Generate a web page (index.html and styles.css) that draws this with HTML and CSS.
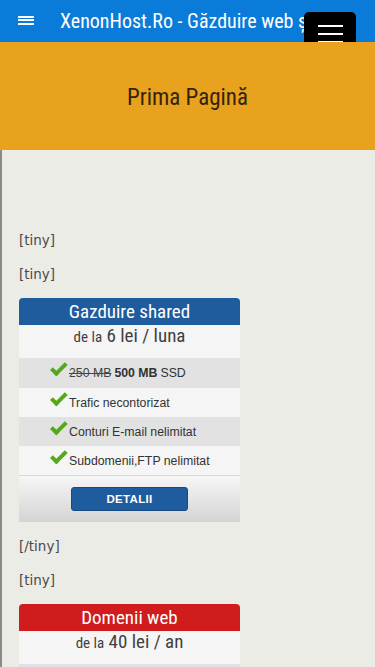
FILE: index.html
```html
<!DOCTYPE html>
<html lang="ro">
<head>
<meta charset="utf-8">
<title>XenonHost.Ro</title>
<link rel="stylesheet" href="styles.css">
</head>
<body>
<header class="topbar">
  <span class="side-toggle" aria-hidden="true"><i></i><i></i><i></i></span>
  <span class="site-title">XenonHost.Ro - Găzduire web şi domenii</span>
  <button class="menu-btn" aria-label="Meniu"><i></i><i></i><i></i></button>
</header>
<section class="hero">
  <h1>Prima Pagină</h1>
</section>
<main class="content">
  <p class="tag">[tiny]</p>
  <p class="tag">[tiny]</p>
  <div class="plan">
    <div class="plan-head blue">Gazduire shared</div>
    <div class="plan-price"><span class="small">de la</span> 6 lei / luna</div>
    <ul class="plan-list">
      <li><span class="check"></span><s>250 MB</s> <b>500 MB</b> SSD</li>
      <li><span class="check"></span>Trafic necontorizat</li>
      <li><span class="check"></span>Conturi E-mail nelimitat</li>
      <li><span class="check"></span>Subdomenii,FTP nelimitat</li>
    </ul>
    <div class="plan-foot"><a class="btn" href="#">DETALII</a></div>
  </div>
  <p class="tag">[/tiny]</p>
  <p class="tag">[tiny]</p>
  <div class="plan">
    <div class="plan-head red">Domenii web</div>
    <div class="plan-price"><span class="small">de la</span> 40 lei / an</div>
    <ul class="plan-list">
      <li></li>
    </ul>
  </div>
</main>
</body>
</html>
```
FILE: styles.css
```css
* { box-sizing: border-box; }
html, body { margin: 0; padding: 0; }
body {
  background: #ecece7;
  font-family: "DejaVu Sans", sans-serif;
  overflow: hidden;
  height: 667px;
}
.topbar {
  height: 42px;
  background: #0a7bd9;
  display: flex;
  align-items: center;
  position: relative;
  overflow: hidden;
}
.side-toggle {
  flex: 0 0 16px;
  display: flex;
  flex-direction: column;
  gap: 1.5px;
  margin: -2px 26px 0 18px;
}
.side-toggle i {
  display: block;
  height: 2px;
  background: #fff;
}
.site-title {
  flex: 0 0 250px;
  overflow: hidden;
  color: #fff;
  font-family: "Roboto Condensed", Roboto, sans-serif;
  font-size: 20px;
  white-space: nowrap;
}
.menu-btn {
  position: absolute;
  left: 304px;
  top: 12px;
  width: 52px;
  height: 43px;
  background: #000;
  border: 0;
  border-radius: 5px;
  padding: 0;
  display: flex;
  flex-direction: column;
  align-items: center;
  justify-content: center;
  gap: 6px;
  z-index: 2;
}
.menu-btn i {
  display: block;
  width: 25px;
  height: 2px;
  background: #fff;
}
.hero {
  background: #e8a21e;
  height: 108px;
  padding-top: 3px;
  display: flex;
  align-items: center;
  justify-content: center;
}
.hero h1 {
  margin: 0;
  font-weight: normal;
  font-family: "Roboto Condensed", Roboto, sans-serif;
  font-size: 23px;
  color: #33240a;
}
.content {
  border-left: 2px solid #8a8a86;
  padding: 80px 0 0 17px;
  min-height: 517px;
}
.tag {
  margin: 0 0 14px;
  font-size: 13.5px;
  line-height: 20px;
  color: #4a4a4a;
}
.plan {
  width: 221px;
  margin-bottom: 14px;
}
.plan-head {
  height: 27px;
  border-radius: 4px 4px 0 0;
  color: #fff;
  text-align: center;
  font-family: "Roboto Condensed", Roboto, sans-serif;
  font-size: 19px;
  line-height: 27px;
}
.plan-head.blue { background: #1f5c9e; }
.plan-head.red { background: #d01c1c; }
.plan-price {
  background: #f5f5f5;
  height: 33px;
  text-align: center;
  color: #3f3f3f;
  font-family: "Roboto Condensed", Roboto, sans-serif;
  font-size: 19px;
  line-height: 22px;
}
.plan-price .small { font-size: 15px; }
.plan-list {
  list-style: none;
  margin: 0;
  padding: 0;
  font-family: "Liberation Sans", Arial, sans-serif;
  font-size: 12.3px;
  color: #333;
}
.plan-list li {
  height: 29px;
  display: flex;
  align-items: center;
  padding-left: 30px;
  background: #f5f5f5;
}
.plan-list li:first-child { height: 30px; }
.plan-list li:nth-child(odd) { background: #e2e2e2; }
.plan-list li s { color: #444; margin-right: 3px; }
.plan-list li b { margin-right: 3px; }
.check {
  flex: 0 0 15px;
  height: 12px;
  margin-right: 3px;
  position: relative;
  top: -3px;
}
.check::before {
  content: "";
  display: block;
  width: 12px;
  height: 5px;
  border-left: 4px solid #55a81a;
  border-bottom: 4px solid #55a81a;
  transform: rotate(-45deg);
  transform-origin: left top;
  margin-top: 6px;
  margin-left: 1px;
}
.plan-foot {
  height: 47px;
  background: linear-gradient(#f6f6f6, #d4d4d4);
  display: flex;
  align-items: center;
  justify-content: center;
  border-top: 1px solid #d8d8d8;
}
.btn {
  display: block;
  width: 117px;
  height: 24px;
  background: #1f5c9e;
  border: 1px solid #174a82;
  border-radius: 3px;
  color: #fff;
  text-decoration: none;
  text-align: center;
  line-height: 22px;
  font-family: "Liberation Sans", Arial, sans-serif;
  font-weight: bold;
  font-size: 11.5px;
  letter-spacing: 0.3px;
}
```
